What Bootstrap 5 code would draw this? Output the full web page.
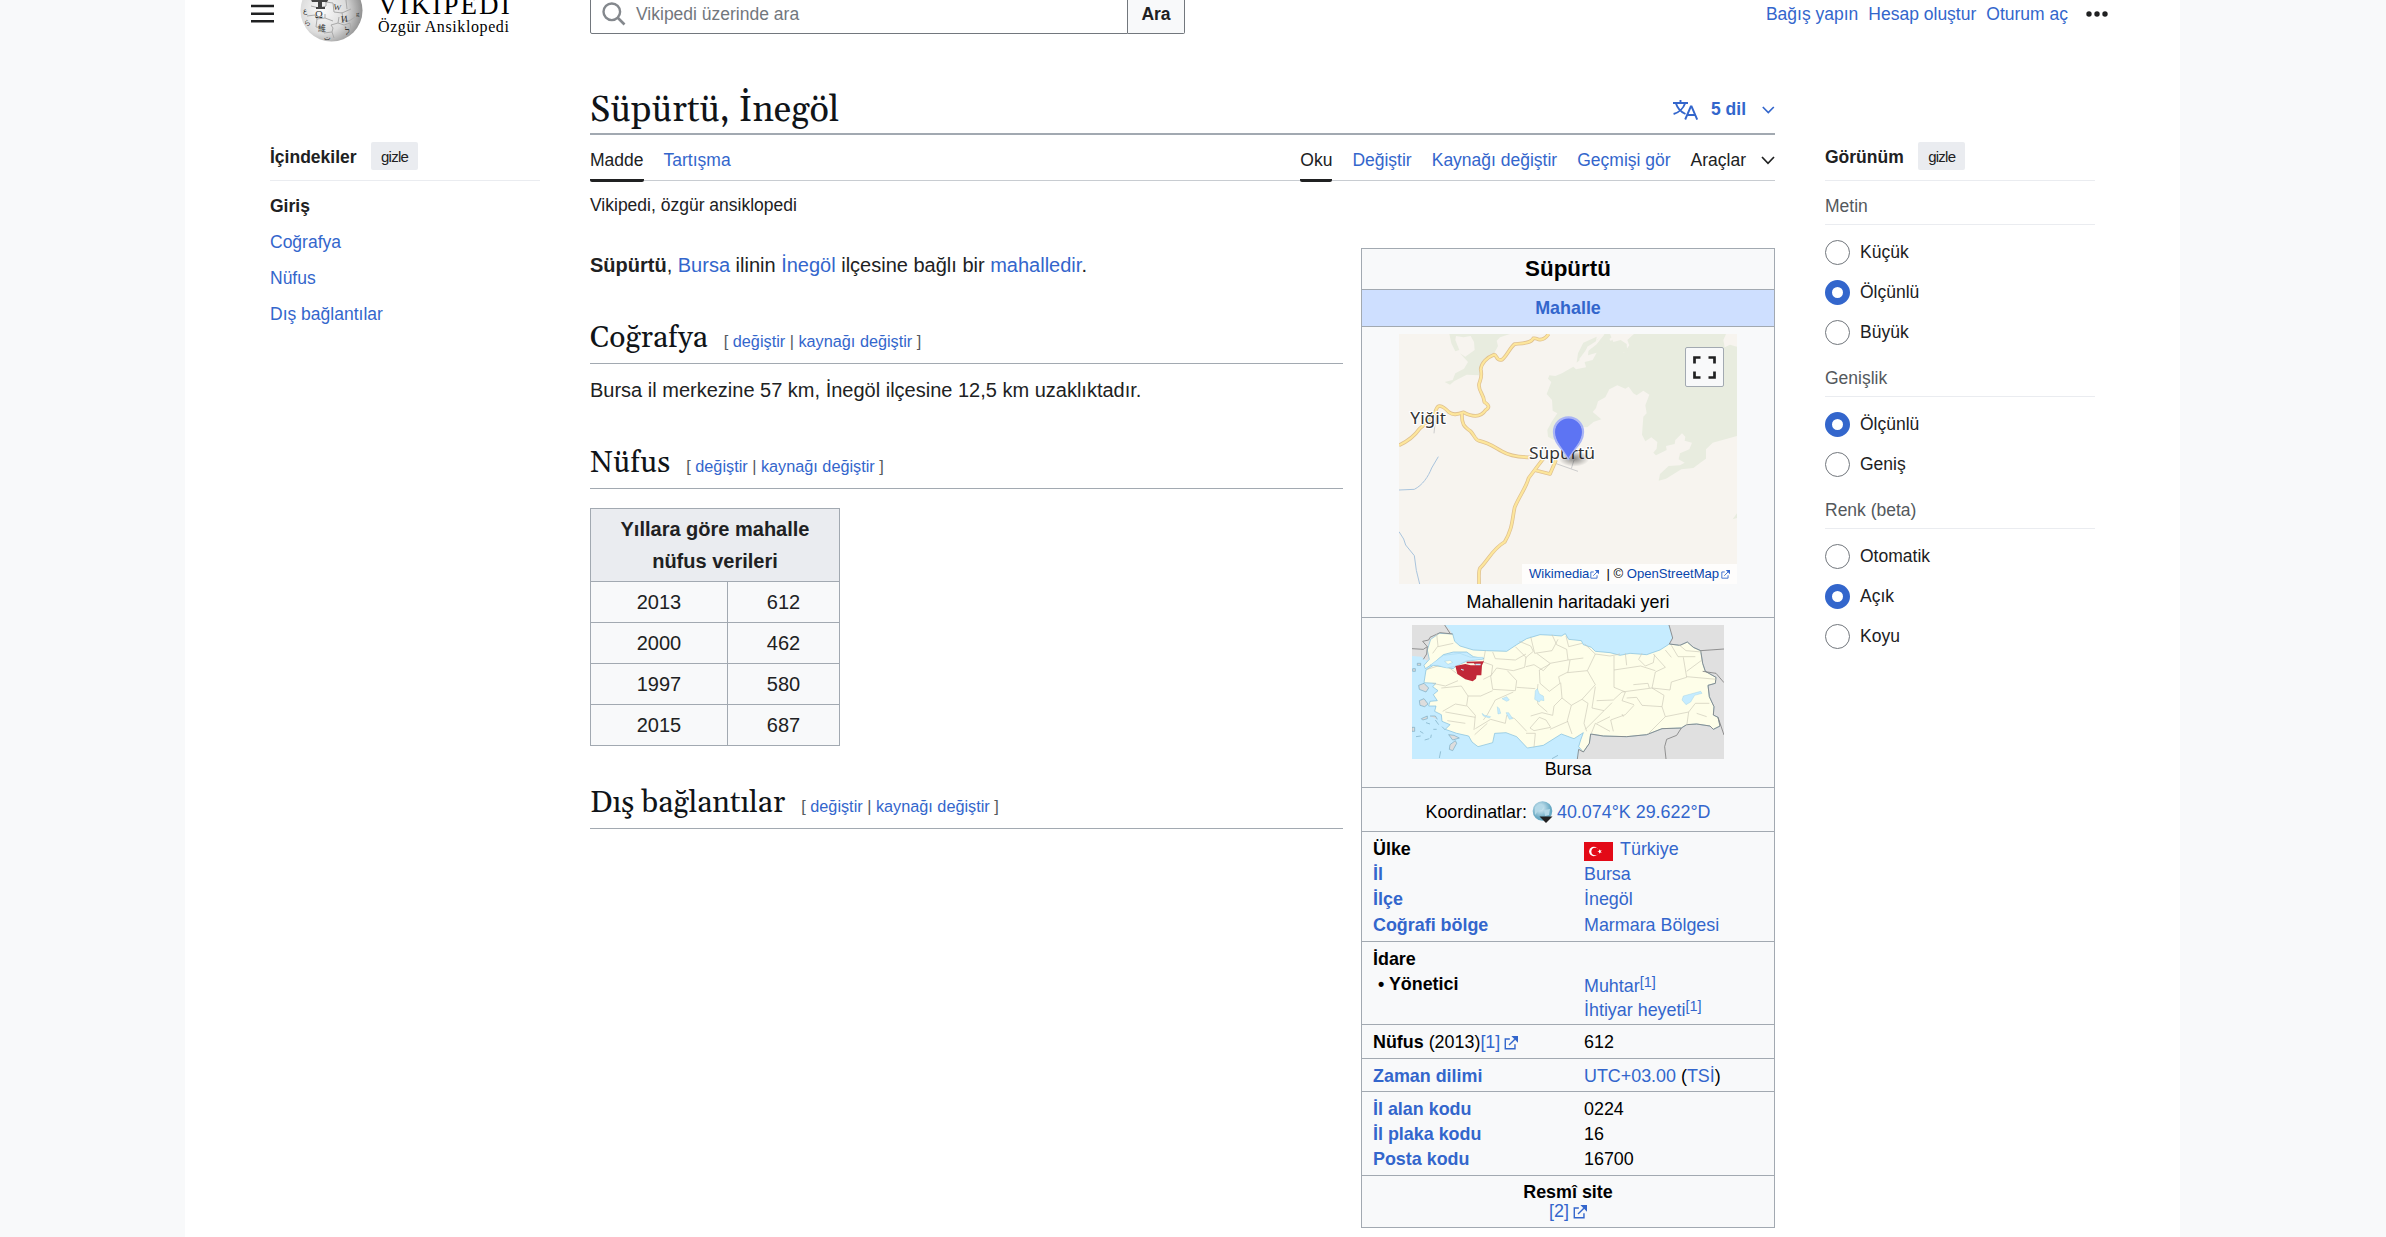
<!DOCTYPE html>
<html lang="tr">
<head>
<meta charset="utf-8">
<title>Süpürtü, İnegöl - Vikipedi</title>
<link href="https://cdn.jsdelivr.net/npm/bootstrap@5.3.0/dist/css/bootstrap.min.css" rel="stylesheet">
<style>
body{background:#f8f9fa;font-family:"Liberation Sans",Arial,sans-serif;font-size:17.5px;line-height:25px;color:#202122;height:1237px;overflow:hidden}
a{color:#36c;text-decoration:none}
svg{display:block}
.wk-page{width:1995px;height:1243px;margin-left:185px}
.wk-head{height:40px;margin-top:-6px;padding-left:66px}
.wk-brand{width:316px;padding-left:26px}
.wk-globe{margin-bottom:7px;flex:none}
.wk-words{font-family:"Liberation Serif",serif;color:#000;padding:3px 0 0 15px;white-space:nowrap}
.wk-w1{font-size:27px;line-height:26px;letter-spacing:2.1px;margin-top:-5px}
.wk-w2{font-size:16px;line-height:16px;letter-spacing:.6px;margin-top:1px}
.wk-search{width:595px;height:40px}
.wk-field{border:1px solid #72777d;border-radius:2px 0 0 2px;width:538px;padding-left:11px;color:#72777d;background:#fff}
.wk-field svg{margin-right:10px}
.wk-go{border:1px solid #72777d;border-left:0;border-radius:0 2px 2px 0;width:57px;background:#f8f9fa;font-weight:700}
.wk-user{gap:10px;margin-right:17px}
.wk-cols{padding-left:85px;gap:50px}
.wk-side{width:270px;padding-top:108px}
.wk-sidehead{height:39px;border-bottom:1px solid #eaecf0;font-weight:700;padding-bottom:10px}
.wk-sidehead>:first-child{padding-top:3px}
.wk-hide{background:#eaecf0;border-radius:2px;font-size:15px;font-weight:400;letter-spacing:-.75px;height:28px;line-height:29px;width:47px;text-align:center;margin-left:14.5px}
.wk-toc{padding-top:13px}
.wk-toc li{height:36px}
.wk-group{border-bottom:1px solid #eaecf0;color:#54595d;height:44px;padding-top:13px}
.wk-radios{padding-top:15px;height:88px}
.wk-radios.wk-three{height:128px}
.wk-radio{height:25px;gap:10px;margin-bottom:15px}
.wk-dot{width:25px;height:25px;border:1px solid #72777d;border-radius:50%;background:#fff}
.wk-dot.on{border:7px solid #36c}
.wk-main{width:1185px}
.wk-title{height:101px;border-bottom:2px solid #a2a9b1;padding-top:52px}
h1,h2{font-family:"Linux Libertine",Georgia,Gelasio,"Liberation Serif",serif;font-weight:400;margin:0;color:#101418}
h1{font-size:36px;line-height:50px}
.wk-lang{font-weight:700;color:#36c;margin-top:11px}
.wk-lang span{padding:0 16px 0 13px}
.wk-tabs{height:46px;border-bottom:1px solid #c8ccd1;gap:20px}
.wk-tabs>*{height:47px;padding-top:13px}
.wk-tabs .on{border-bottom:3px solid #202122;border-radius:0 0 2px 2px;color:#202122;height:47px;margin-bottom:-2px}
.wk-tabs svg{margin:8px 0 0 15px}
.wk-sub{margin-top:12px;height:25px}
.wk-body{margin-top:29px}
.wk-text{width:753px;font-size:20px;line-height:32px}
.wk-text p{margin:0;padding-top:10px}
.wk-text p:first-child{padding-top:2px}
h2{font-size:30px;line-height:41px;height:46px;border-bottom:1px solid #a2a9b1;margin-top:37px}
h2 span{font-family:"Liberation Sans",sans-serif;font-size:16.25px;color:#54595d;margin-left:16px}
.wk-data{border-collapse:collapse;width:250px;background:#f8f9fa;text-align:center;margin-top:19px}
.wk-data th,.wk-data td{border:1px solid #a2a9b1;padding:4px 20px;line-height:32px;color:#202122}
.wk-data th{background:#eaecf0;padding:4px 20px}
.wk-data td:first-child{width:137px}
.wk-box{width:414px;border:1px solid #a2a9b1;background:#f8f9fa;color:#000;font-size:17.9px;line-height:25px;margin-top:1px;height:980px}
.wk-name{height:40px;font-size:22.4px;line-height:40px}
.wk-sec{border-top:1px solid #a2a9b1;padding-top:5px}
.wk-type{height:37px;line-height:36px;background:#cedfff;padding:0}
.wk-sec dt,.wk-sec dd{margin:0;height:25.2px;white-space:nowrap}
.wk-sec dt{width:222px;padding-left:11px}
.wk-sec .wk-board{line-height:23.5px;padding-top:3px}
.wk-map{width:338px;height:250px;margin:2px auto 0}
.wk-credit{right:0;bottom:0;background:#fffc;font-size:13.1px;line-height:20px;width:215px;height:20px;padding-left:7px;white-space:nowrap}
.wk-credit a{color:#0645ad}
.wk-full{right:13px;top:13px;width:39px;height:40px;background:#f8f9fa;border:1px solid #a2a9b1;border-radius:2px}
.wk-sup{font-size:14.5px;vertical-align:5px;line-height:1}
.wk-in{display:inline-block;margin-left:4px}
.wk-globe2{margin:0 4px 0 5px}
.wk-flag{margin:4px 7px 0 0}
</style>
<script src="https://cdn.jsdelivr.net/npm/bootstrap@5.3.0/dist/js/bootstrap.bundle.min.js"></script>
</head>
<body>
<svg width="0" height="0" class="position-absolute"><defs>
<symbol id="ext" viewBox="0 0 12 12"><path fill="none" stroke="#36c" stroke-width="1.2" d="M5 2.6H1.100v8.300h8.300V7M4.300 7.700l5-5"/><path fill="#36c" d="M6.300 0H12v5.700z"/></symbol>
</defs></svg>
<div class="wk-page bg-white">
<header class="wk-head d-flex align-items-center">
  <svg width="23" height="20" viewBox="0 0 23 20"><path stroke="#202122" stroke-width="2.4" d="M0 2h23M0 9.700h23M0 17.300h23"/></svg>
  <div class="wk-brand d-flex align-items-center">
    <svg class="wk-globe" width="63" height="63" viewBox="0 0 63 63"><defs><radialGradient id="gl" cx=".36" cy=".5" r=".68"><stop offset="0" stop-color="#fbfbfb"/><stop offset=".55" stop-color="#dcdcdc"/><stop offset="1" stop-color="#858585"/></radialGradient></defs>
      <circle cx="31.500" cy="31.500" r="31" fill="url(#gl)"/>
      <path d="M9 20h8l-1-4 5 2 1-4M11 27l8 2 7-2v-4l7 1 1 9 8 1 9-4M7 37l8-1 2 4 8-1v-4M17 40l-1 8 7 1 1 5 8-1 1-4-2-3 7-2 1-6M42 33l1 8 6 1 6-4M32 53l2 6M38 44l6 2 6-2 1 6M26 23l-8-3M47 30l-1-9M25 39l8 3" fill="none" stroke="#aaa" stroke-width="1"/>
      <path d="M10 18h20l-3 5h-5v5h3v2h-9v-2h2v-5h-6z" fill="#444"/>
      <g fill="#333" font-family="Liberation Serif, serif"><text x="15" y="39" font-size="10.500">Ω</text><text x="34" y="31" font-size="8" transform="rotate(8 38 25)">W</text><text x="41" y="43" font-size="9.500" transform="rotate(-6 45 40)">И</text><text x="18" y="52" font-size="8" style="font-family:'Noto Sans CJK SC',sans-serif">維</text><text x="45" y="56" font-size="10">ל</text><text x="24" y="61" font-size="7">ت</text><text x="3" y="34" font-size="7">ع</text><text x="4" y="46" font-size="7">ら</text><text x="56" y="37" font-size="7">g</text></g>
    </svg>
    <div class="wk-words"><div class="wk-w1">VİKİPEDİ</div><div class="wk-w2">Özgür Ansiklopedi</div></div>
  </div>
  <div class="wk-search d-flex">
    <div class="wk-field d-flex align-items-center"><svg width="24" height="24" viewBox="0 0 24 24"><circle cx="9.800" cy="9.800" r="8.300" fill="none" stroke="#84888d" stroke-width="2.400"/><path stroke="#84888d" stroke-width="2.600" d="M15.500 15.500l7 7"/></svg>Vikipedi üzerinde ara</div>
    <div class="wk-go d-flex align-items-center justify-content-center">Ara</div>
  </div>
  <nav class="wk-user d-flex align-items-center ms-auto"><a href="#">Bağış yapın</a><a href="#">Hesap oluştur</a><a href="#">Oturum aç</a></nav>
  <svg width="95" height="8" viewBox="0 0 95 8"><g fill="#202122"><circle cx="4" cy="4" r="2.700"/><circle cx="12" cy="4" r="2.700"/><circle cx="20" cy="4" r="2.700"/></g></svg>
</header>
<div class="wk-cols d-flex align-items-start">
  <aside class="wk-side">
    <div class="wk-sidehead d-flex align-items-center"><span>İçindekiler</span><span class="wk-hide">gizle</span></div>
    <ul class="wk-toc list-unstyled m-0"><li class="fw-bold">Giriş</li><li><a href="#">Coğrafya</a></li><li><a href="#">Nüfus</a></li><li><a href="#">Dış bağlantılar</a></li></ul>
  </aside>
  <main class="wk-main">
    <div class="wk-title d-flex align-items-start justify-content-between">
      <h1>Süpürtü, İnegöl</h1>
      <div class="wk-lang d-flex align-items-center">
        <svg width="25" height="20" viewBox="0 0 25 20"><g fill="none" stroke="#36c" stroke-width="1.900"><path d="M0 3h15M7.500 0v3M3 3.500c1.500 5 5 8.500 9.500 10.500M12 3.500C10.500 8 6 12.500.6 14"/><path d="M12.200 19.500L17.800 6.500h.8L24.200 19.500M14 15h8.500"/></g></svg>
        <span>5 dil</span>
        <svg width="13" height="8" viewBox="0 0 13 8"><path d="M.8 1l5.500 5.500L11.800 1" fill="none" stroke="#36c" stroke-width="1.700"/></svg>
      </div>
    </div>
    <div class="wk-tabs d-flex"><span class="on">Madde</span><a href="#" class="me-auto">Tartışma</a><span class="on">Oku</span><a href="#">Değiştir</a><a href="#">Kaynağı değiştir</a><a href="#">Geçmişi gör</a><span class="d-flex">Araçlar<svg width="14" height="9" viewBox="0 0 14 9"><path d="M1 1l6 6.300L13 1" fill="none" stroke="#202122" stroke-width="1.700"/></svg></span></div>
    <div class="wk-sub">Vikipedi, özgür ansiklopedi</div>
    <div class="wk-body d-flex align-items-start justify-content-between">
      <div class="wk-text">
        <p><b>Süpürtü</b>, <a href="#">Bursa</a> ilinin <a href="#">İnegöl</a> ilçesine bağlı bir <a href="#">mahalledir</a>.</p>
        <h2>Coğrafya<span>[ <a href="#">değiştir</a> | <a href="#">kaynağı değiştir</a> ]</span></h2>
        <p>Bursa il merkezine 57 km, İnegöl ilçesine 12,5 km uzaklıktadır.</p>
        <h2>Nüfus<span>[ <a href="#">değiştir</a> | <a href="#">kaynağı değiştir</a> ]</span></h2>
        <table class="wk-data"><tr><th colspan="2">Yıllara göre mahalle nüfus verileri</th></tr>
        <tr><td>2013</td><td>612</td></tr><tr><td>2000</td><td>462</td></tr><tr><td>1997</td><td>580</td></tr><tr><td>2015</td><td>687</td></tr></table>
        <h2>Dış bağlantılar<span>[ <a href="#">değiştir</a> | <a href="#">kaynağı değiştir</a> ]</span></h2>
      </div>
      <div class="wk-box">
        <div class="wk-name text-center fw-bold">Süpürtü</div>
        <div class="wk-sec wk-type text-center fw-bold"><a href="#">Mahalle</a></div>
        <div class="wk-sec text-center" style="height:291px">
          <div class="wk-map position-relative">
            <svg width="338" height="250" viewBox="147 282 1014 750"><path fill="#f7f4ef" d="M147 282h1014v750H147z"/>
              <path fill="#e8ecdf" d="M298 282L304 310L316 334L328 330L316 300L318 288L340 292L362 288L372 306L374 330L346 350L330 340L354 366L342 386L316 400L308 420L284 426L300 434L312 424L350 404L388 406L392 384L412 362L430 344L444 318L440 302L450 292L480 282z"/>
              <path fill="#e8ecdf" d="M852 282L832 300L838 316L822 338L806 320L778 306L748 304L716 326L714 346L740 338L728 360L704 366L708 382L678 388L670 380L636 400L616 408L598 406L594 416L604 426L590 462L606 480L608 512L622 520L606 544L592 570L594 590L612 600L640 560L690 560L712 562L730 546L754 538L728 516L738 504L744 484L766 472L778 448L802 436L826 446L836 440L850 460L860 466L880 452L898 464L886 496L890 520L880 530L876 584L886 604L904 592L922 606L920 626L910 638L918 646L950 630L948 618L974 612L976 600L996 580L1006 590L1004 602L1026 608L1018 628L990 640L986 658L1004 668L990 676L956 678L930 702L926 722L948 716L994 688L1030 684L1054 666L1068 656L1068 628L1088 608L1161 588V320L1140 314L1124 322L1120 300L1128 282z"/>
              <path fill="#e8ecdf" d="M780 282L790 306L812 300L830 312L832 338L806 334L776 312L752 310L740 300L764 282zM740 290L700 308L684 340L680 368L700 350L712 320L738 304zM1148 838l13-18v14z"/>
              <path fill="none" stroke="#f7f4ef" stroke-width="7" d="M760 282L736 312L712 330L690 360M806 282L780 300"/>
              <path fill="none" stroke="#a9c4dd" stroke-width="3" d="M147 750l46-2c24-12 42-38 52-64l20-34M147 875l14 22 6 18 26 32 6 44 10 41"/>
              <path fill="none" stroke="#ccc" stroke-width="3" d="M260 500l-8 80M610 668l74 26M672 660l-8 26"/>
              <path id="rd" fill="none" stroke="#dfc190" stroke-width="11" stroke-linejoin="round" d="M596 282c-10 14-16 17-26 17-9 0-10-6-20-4-8 16-34 15-56 17-15 12-24 37-38 47-18 5-14-14-24-15-22 8-38 26-40 44 6 20 0 28-5 45-2 21 15 30 16 53 18 12 14 18 4 24-15 23-38 22-66 7-20 7-32 9-44 0-10-11-18-18-28-19-12 0-8 12-18 28-12 14-30 30-42 40-18 26-36 38-62 50M336 520c-2 32 6 40 26 54 10 10 14 26 24 28 32 7 48 20 70 32 25 15 52 18 90 18M580 656l-26 34-18 24c-8 30-28 54-42 88-8 38-6 64-30 104-36 20-52 58-74 78-6 12-2 30-3 48M552 690l48 12 18-42"/>
              <path fill="none" stroke="#fde69b" stroke-width="6.500" stroke-linejoin="round" d="M596 282c-10 14-16 17-26 17-9 0-10-6-20-4-8 16-34 15-56 17-15 12-24 37-38 47-18 5-14-14-24-15-22 8-38 26-40 44 6 20 0 28-5 45-2 21 15 30 16 53 18 12 14 18 4 24-15 23-38 22-66 7-20 7-32 9-44 0-10-11-18-18-28-19-12 0-8 12-18 28-12 14-30 30-42 40-18 26-36 38-62 50M336 520c-2 32 6 40 26 54 10 10 14 26 24 28 32 7 48 20 70 32 25 15 52 18 90 18M580 656l-26 34-18 24c-8 30-28 54-42 88-8 38-6 64-30 104-36 20-52 58-74 78-6 12-2 30-3 48M552 690l48 12 18-42"/>
              <g font-family="Noto Sans, sans-serif" font-size="50" fill="#333" stroke="#fff" stroke-width="7" stroke-linejoin="round" paint-order="stroke"><text x="181" y="552" textLength="107" lengthAdjust="spacingAndGlyphs">Yiğit</text><text x="537" y="656" textLength="198" lengthAdjust="spacingAndGlyphs">Süpürtü</text></g>
              <defs><radialGradient id="sh"><stop offset="0" stop-color="#000" stop-opacity=".45"/><stop offset="1" stop-color="#000" stop-opacity="0"/></radialGradient></defs>
              <ellipse cx="672" cy="656" rx="46" ry="24" fill="url(#sh)"/>
              <path d="M655 654c-14-28-43-44-43-78a43.500 44 0 0 1 87 0c0 34-30 50-44 78z" fill="#5d74f3" stroke="#a9b4f5" stroke-width="7"/><path d="M655 654c-14-28-39-46-39-78a39.500 39 0 0 1 79 0c0 32-26 50-40 78z" fill="#5d74f3"/>
            </svg>
            <div class="wk-full position-absolute d-flex align-items-center justify-content-center"><svg width="23" height="23" viewBox="0 0 23 23"><path d="M1.500 7.500v-6h6M15.500 1.500h6v6M21.500 15.500v6h-6M7.500 21.500h-6v-6" fill="none" stroke="#202122" stroke-width="2.700"/></svg></div>
            <div class="wk-credit position-absolute text-start"><a href="#">Wikimedia</a><svg class="wk-in ms-0" style="margin-right:6px" width="11" height="9"><use href="#ext"/></svg>| © <a href="#">OpenStreetMap</a><svg class="wk-in ms-0" width="13" height="9"><use href="#ext"/></svg></div>
          </div>
          <div style="line-height:36px">Mahallenin haritadaki yeri</div>
        </div>
        <div class="wk-sec text-center" style="height:170px">
          <svg class="mx-auto" style="margin-top:2px" width="312" height="134" viewBox="186 75 936 402"><path fill="#c6ecff" d="M186 75h936v402H186z"/>
            <path fill="#e0e0e0" d="M186 75H284L298 88L308 104L300 130L230 182L214 170L186 168zM957 75H1122V477H684L688 452L720 400L900 380L1000 350L1040 300V150L958 132L968 114z"/>
            <path fill="#fefee9" stroke="#7fbcdb" stroke-width="2" stroke-linejoin="round" d="M308 102L314 124L330 138L370 150L410 152L470 154L500 134L530 116L570 104L610 106L634 108L646 101L656 118L694 122L700 134L724 142L736 154L780 158L810 166L840 160L890 164L930 150L958 132L990 136L1012 126L1030 142L1052 152L1058 190L1066 214L1098 232L1096 250L1074 256L1078 290L1092 320L1090 345L1104 352L1110 378L1090 388L1080 378L1040 372L1010 374L994 384L936 386L890 404L830 410L760 408L722 402L718 430L700 456L686 440L692 420L700 398L672 416L634 402L580 436L532 444L500 410L468 398L434 400L428 428L384 440L366 426L356 408L320 400L286 388L300 374L276 364L274 344L254 334L258 318L236 318L240 304L262 302L250 284L264 272L248 260L258 250L222 248L228 210L250 196L310 206L320 196L350 184L402 176L370 170L350 156L310 156L280 164L250 190L226 206L222 196L238 178L232 150L242 118L268 100z"/>
            <path fill="none" stroke="#808080" stroke-width="2.500" d="M308 102L270 98L240 112L236 120L218 124L232 140L220 148L186 146M232 140L230 162L220 178M284 75L300 100M957 75L968 114L958 132L990 136L1012 126L1030 142L1052 152L1122 147M1052 152L1058 190L1066 214L1098 232L1096 250L1074 256L1078 290L1092 320L1090 345L1104 352L1110 378L1090 388L1080 378L1040 372L1010 374L994 384L936 386L890 404L830 410L760 408L722 402L718 430L700 456L686 448L682 477M1058 214L1098 220L1122 248M1104 352L1122 405M994 384L980 406L950 418L944 440L948 477"/>
            <path fill="none" stroke="#cbc8b8" stroke-width="2" d="M260 102L264 138L248 160M310 130L264 140M406 152L400 186L428 196L424 226L400 238M428 156L436 176L496 180L528 162M496 140L528 172L524 202L490 212L440 204L422 228L428 268L496 272L500 242L472 212M508 124L542 138L550 154L526 174M542 110L554 160L606 152L624 118M606 104L620 134L650 148L654 180L600 190M648 108L656 140L696 130M560 160L600 190L580 212L552 194L528 200M704 132L736 162L780 168L810 162M660 180L654 216L626 230L630 250L598 274L570 250L568 210L600 192M736 162L712 212L652 218M654 180L700 174M712 212L736 254L696 298L664 316L636 294L632 248M792 168V262L826 276L816 302L852 314M792 210L872 198L916 212M826 160L830 196M876 160L866 178L886 198L910 188L914 164M910 162L946 202L916 216L906 264M946 150L964 172M964 136L984 170L1036 170M984 132L1008 152L1056 156M1000 172L1010 232L964 246L960 270L906 264M1010 230L1100 238M1056 180L1010 214M906 264L816 276L790 300L740 302M906 264L942 286L936 320L876 316L860 292L830 294M936 320L946 350L1016 336L1036 310L1078 310M1016 336L1010 378M946 350L894 402M852 316L826 344L782 360L790 394M736 260L726 324L762 332L786 308M762 332L706 388M696 298L714 310L702 370L710 394M664 316L652 362L666 402M636 294L612 318L608 346L576 338L542 348M564 252L560 288L564 312L592 336M500 262L556 266M490 276L436 300L412 344L400 360M428 272L392 288L354 288L350 316L376 346L372 390M354 288L334 258L274 264M350 318L316 312L278 334M376 352L286 336M346 370L292 362M376 386L422 358L466 370L470 346L494 356L530 394M540 384L568 352L588 360L602 382L552 392zM528 400H556L552 442M412 370L374 404M600 388L654 364M248 250L286 258L324 242M232 208L282 192L320 220M850 254L894 250L898 264M740 370L780 350M724 400L736 370L780 394M820 350L816 342M1070 350L1040 340"/>
            <path fill="#c6ecff" stroke="#8fc8e2" d="M240 196L280 166L330 160L362 172L400 172L398 178L350 182L320 198L290 204L262 196zM556 272l6-6 6 16 12 6 2 14-10-2-4 6-14-8zM996 300l4-12 22-6 30-8 4 6-22 6-12 20-14 8zM442 320l6 6 4 14-8 2zM468 338l8 0 12 18-10 2zM396 340l8 6 18 4-4 4-18-6zM456 296l14-6 8 10-8 4z"/>
            <path fill="#fefee9" stroke="#7fbcdb" d="M284 184l16-3 8 6-14 6z"/>
            <path fill="#c12838" d="M316 198L346 192L362 196L376 196L372 190L350 190V185L402 184L396 196L394 226L380 226L378 236L368 244L346 238L322 222z"/><path fill="#c6ecff" d="M376 191h16v5h-16zM333 206l9 3-2 3-7-3z"/>
            <g fill="#ddd" stroke="#78a9c0" stroke-width="2"><path d="M206 256l16-6 14 14-8 12-20-8zM208 302l14-6 12 16-10 8-14-4zM316 422l4 8-12 22-10-4 2-14zM296 404l16 2 16 8-20 6zM188 206h8v8h-8zM202 190h10v6h-10zM214 356l18-8v8l-14 4zM186 382h8v12h-8zM198 410l14-2M210 394l10 6M240 348l16 0 6 10M256 360l10 14M224 420l14-4M272 454l-4 20M606 476l18-10M250 388h10M228 368l12 4M276 380l10 10M244 404l-2 10"/></g>
          </svg>
          <div style="line-height:20px">Bursa</div>
        </div>
        <div class="wk-sec text-center d-flex align-items-center justify-content-center" style="height:44px">Koordinatlar:
          <svg class="wk-globe2" width="21" height="22" viewBox="0 0 21 22"><defs><radialGradient id="wg" cx=".4" cy=".35"><stop offset="0" stop-color="#e4f4fb"/><stop offset="1" stop-color="#6aaac4"/></radialGradient></defs><circle cx="10.500" cy="10" r="9.800" fill="url(#wg)"/><path d="M3 6l5-3 4 2-2 4-4 1-3 4zM12 9l6-1-1 6-4 1z" fill="#b4d9e8"/><path d="M7.500 15.500h13l-6.500 6.500z" fill="#222"/></svg><a href="#">40.074°K 29.622°D</a></div>
        <div class="wk-sec" style="height:110px"><dl class="d-flex m-0">
          <dt>Ülke</dt><dd class="d-flex align-items-center"><svg class="wk-flag" width="29" height="19" viewBox="0 0 29 19"><path fill="#e30a17" d="M0 0h29v19H0z"/><circle cx="9.800" cy="9.500" r="4.700" fill="#fff"/><circle cx="11.200" cy="9.500" r="3.800" fill="#e30a17"/><path fill="#fff" d="M13.300 9.500l1.700-.6.100-1.700 1 1.400 1.600-.5-1 1.400 1 1.400-1.600-.5-1 1.400-.1-1.700z"/></svg><a href="#">Türkiye</a></dd></dl>
          <dl class="d-flex m-0"><dt><a href="#">İl</a></dt><dd><a href="#">Bursa</a></dd></dl><dl class="d-flex m-0"><dt><a href="#">İlçe</a></dt><dd><a href="#">İnegöl</a></dd></dl><dl class="d-flex m-0"><dt><a href="#">Coğrafi bölge</a></dt><dd><a href="#">Marmara Bölgesi</a></dd></dl></div>
        <div class="wk-sec" style="height:83px"><dl class="m-0"><dt>İdare</dt></dl><dl class="d-flex m-0"><dt>&nbsp;• Yönetici</dt><dd class="wk-board"><a href="#">Muhtar<span class="wk-sup">[1]</span></a><br><a href="#">İhtiyar heyeti<span class="wk-sup">[1]</span></a></dd></dl></div>
        <div class="wk-sec" style="height:34px"><dl class="d-flex m-0"><dt>Nüfus <span class="fw-normal">(2013)<a href="#">[1]</a></span><svg class="wk-in" width="14" height="14"><use href="#ext"/></svg></dt><dd>612</dd></dl></div>
        <div class="wk-sec" style="height:33px"><dl class="d-flex m-0"><dt><a href="#">Zaman dilimi</a></dt><dd><a href="#">UTC+03.00</a> (<a href="#">TSİ</a>)</dd></dl></div>
        <div class="wk-sec" style="height:84px"><dl class="d-flex m-0"><dt><a href="#">İl alan kodu</a></dt><dd>0224</dd></dl><dl class="d-flex m-0"><dt><a href="#">İl plaka kodu</a></dt><dd>16</dd></dl><dl class="d-flex m-0"><dt><a href="#">Posta kodu</a></dt><dd>16700</dd></dl></div>
        <div class="wk-sec text-center" style="line-height:19px;padding-top:7px"><b>Resmî site</b><br><a href="#">[2]</a><svg class="wk-in" width="14" height="14"><use href="#ext"/></svg></div>
      </div>
    </div>
  </main>
  <aside class="wk-side">
    <div class="wk-sidehead d-flex align-items-center"><span>Görünüm</span><span class="wk-hide">gizle</span></div>
    <div class="wk-group">Metin</div>
    <div class="wk-radios wk-three"><div class="wk-radio d-flex align-items-center"><span class="wk-dot"></span>Küçük</div><div class="wk-radio d-flex align-items-center"><span class="wk-dot on"></span>Ölçünlü</div><div class="wk-radio d-flex align-items-center"><span class="wk-dot"></span>Büyük</div></div>
    <div class="wk-group">Genişlik</div>
    <div class="wk-radios"><div class="wk-radio d-flex align-items-center"><span class="wk-dot on"></span>Ölçünlü</div><div class="wk-radio d-flex align-items-center"><span class="wk-dot"></span>Geniş</div></div>
    <div class="wk-group">Renk (beta)</div>
    <div class="wk-radios wk-three"><div class="wk-radio d-flex align-items-center"><span class="wk-dot"></span>Otomatik</div><div class="wk-radio d-flex align-items-center"><span class="wk-dot on"></span>Açık</div><div class="wk-radio d-flex align-items-center"><span class="wk-dot"></span>Koyu</div></div>
  </aside>
</div>
</div>
</body>
</html>
